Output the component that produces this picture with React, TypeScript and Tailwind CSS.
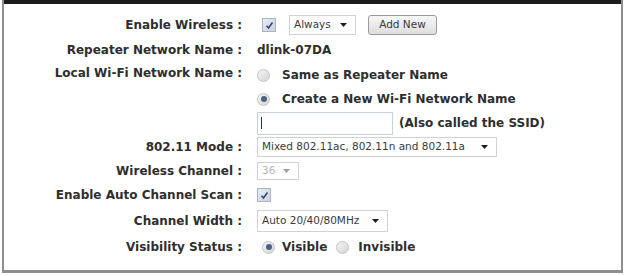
import React from "react";

const font = { fontFamily: '"DejaVu Sans", Tahoma, Verdana, sans-serif' };

function Arrow({ muted = false }: { muted?: boolean }) {
    return (
        <svg width="7" height="4" viewBox="0 0 7 4" className="shrink-0">
            <path d="M0 0h7L3.5 4z" fill={muted ? "#a0a0a0" : "#1e1e1e"} />
        </svg>
    );
}

function Select({ value, className, muted = false }: { value: string; className: string; muted?: boolean }) {
    return (
        <div className={`flex items-center justify-between border border-[#d2d2d2] bg-white pl-[4px] pr-[8px] text-[10.5px] ${muted ? "text-[#b4b4b4]" : "text-[#3a3a3a]"} ${className}`}>
            <span className="whitespace-nowrap">{value}</span>
            <Arrow muted={muted} />
        </div>
    );
}

function Checkbox({ className = "" }: { className?: string }) {
    return (
        <div className={`flex h-[14px] w-[14px] items-center justify-center border border-[#a9b5c7] bg-gradient-to-br from-[#e9edf4] to-[#c9d2e0] ${className}`}>
            <svg width="9" height="9" viewBox="0 0 9 9">
                <path d="M1.5 4.8l2 2.2L7.5 1.5" fill="none" stroke="#36467a" strokeWidth="1.6" />
            </svg>
        </div>
    );
}

function Radio({ checked = false }: { checked?: boolean }) {
    return (
        <div className="flex h-[13px] w-[13px] shrink-0 items-center justify-center rounded-full border border-[#c4c4c4] bg-gradient-to-br from-[#f4f4f4] to-[#d6d6d6]">
            {checked && <div className="h-[6px] w-[6px] rounded-full bg-[#4a6284]" />}
        </div>
    );
}

function Row({ label, h, children, labelClass = "", valueClass = "" }: { label?: string; h: string; children: React.ReactNode; labelClass?: string; valueClass?: string }) {
    return (
        <div className={`flex items-center ${h}`}>
            <div className={`w-[238px] shrink-0 text-right whitespace-nowrap ${labelClass}`}>{label}</div>
            <div className={`ml-[15px] flex items-center ${valueClass}`}>{children}</div>
        </div>
    );
}

export default function App() {
    return (
        <div className="h-[276px] w-[626px] bg-white" style={font}>
            <div className="ml-[2px] w-[621px] border-x-[2px] border-b-[3px] border-[#8e8e8e]">
                <div className="h-[4px] bg-[#1c1c1c]" />
                <div className="pt-[9px] pb-[10px] text-[12px] font-bold text-[#2e2e2e]">
                    <Row label="Enable Wireless :" h="h-[24px]">
                        <Checkbox className="ml-[5px]" />
                        <Select value="Always" className="ml-[13px] h-[20px] w-[67px] font-normal" />
                        <button className="ml-[12px] h-[20px] w-[69px] rounded-[3px] border border-[#9a9a9a] bg-gradient-to-b from-[#f7f7f7] to-[#dedede] text-[10.5px] font-normal text-[#3a3a3a]">
                            Add New
                        </button>
                    </Row>
                    <Row label="Repeater Network Name :" h="h-[25px]">
                        <span>dlink-07DA</span>
                    </Row>
                    <Row label="Local Wi-Fi Network Name :" h="h-[25px]" labelClass="pb-[4px]" valueClass="pt-[1px]">
                        <Radio />
                        <span className="ml-[12px]">Same as Repeater Name</span>
                    </Row>
                    <Row h="h-[24px]">
                        <Radio checked />
                        <span className="ml-[12px]">Create a New Wi-Fi Network Name</span>
                    </Row>
                    <Row h="h-[24px]">
                        <div className="flex h-[23px] w-[136px] items-center border border-[#c9d0da] bg-white pl-[3px]">
                            <div className="h-[12px] w-[1px] bg-[#333]" />
                        </div>
                        <span className="ml-[6px]">(Also called the SSID)</span>
                    </Row>
                    <Row label="802.11 Mode :" h="h-[24px]">
                        <Select value="Mixed 802.11ac, 802.11n and 802.11a" className="h-[20px] w-[240px] font-normal" />
                    </Row>
                    <Row label="Wireless Channel :" h="h-[23px]">
                        <Select value="36" muted className="h-[18px] w-[42px] font-normal" />
                    </Row>
                    <Row label="Enable Auto Channel Scan :" h="h-[26px]">
                        <Checkbox />
                    </Row>
                    <Row label="Channel Width :" h="h-[26px]">
                        <Select value="Auto 20/40/80MHz" className="h-[22px] w-[131px] font-normal" />
                    </Row>
                    <Row label="Visibility Status :" h="h-[26px]">
                        <div className="ml-[5px] flex items-center">
                            <Radio checked />
                            <span className="ml-[7px]">Visible</span>
                            <div className="ml-[9px]">
                                <Radio />
                            </div>
                            <span className="ml-[9px]">Invisible</span>
                        </div>
                    </Row>
                </div>
            </div>
        </div>
    );
}
